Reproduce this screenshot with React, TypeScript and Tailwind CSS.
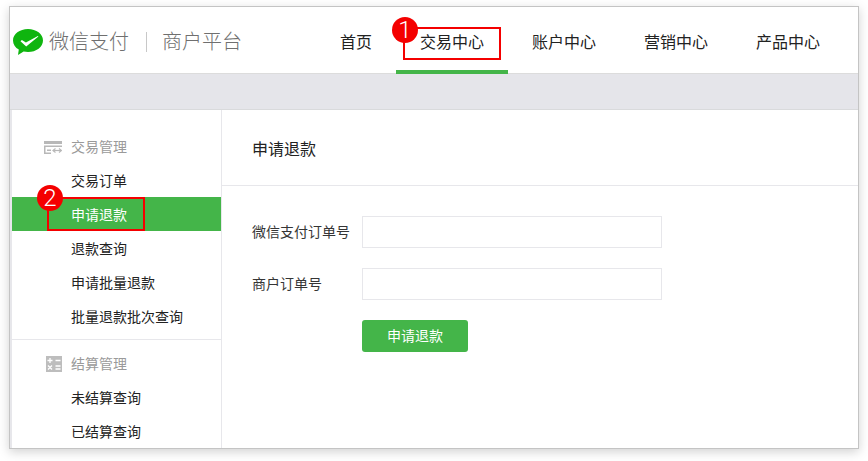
const font = "font-['Liberation_Sans','Noto_Sans_CJK_SC',sans-serif]";

const navItems = ["首页", "交易中心", "账户中心", "营销中心", "产品中心"];

const Logo = () => (
  <svg width="30" height="26" viewBox="0 0 30 26" className="shrink-0">
    <path
      d="M15 0C6.700 0 0 5 0 11.400c0 3.800 2.300 7.100 5.800 9.200L5 26l5.600-3.400c1.400.3 2.900.4 4.400.4 8.300 0 15-5.200 15-11.600S23.300 0 15 0z"
      fill="#0fb50f"
    />
    <path d="M7.500 12.200l1.400-1.300 4 2.600 12-6.500.5.600-12.200 10z" fill="#fff" />
  </svg>
);

const TradeIcon = () => (
  <svg width="18" height="13" viewBox="0 0 18 13" className="shrink-0">
    <path d="M0 0h18v3H0zM0 4.500h18V6H0zM0 6h1.500v7H0zM0 11.500h7V13H0zM3 8.500h4V10H3z" fill="#b8b8b8" />
    <path d="M9 9.500h8.500" stroke="#b8b8b8" strokeWidth="1.200" fill="none" />
    <path d="M11.500 7.500l-2.500 2 2.500 2M15 7.500l2.500 2-2.500 2" stroke="#b8b8b8" strokeWidth="1.200" fill="none" />
  </svg>
);

const CalcIcon = () => (
  <svg width="16" height="16" viewBox="0 0 16 16" className="shrink-0">
    <rect width="16" height="16" fill="#bdbdbd" />
    <path
      d="M1.500 4.500h5M4 2v5M9.500 4.500h5M2 9.500l4 4M6 9.500l-4 4M9.500 10h5M9.500 13h5"
      stroke="#fff"
      strokeWidth="1.300"
      fill="none"
    />
  </svg>
);

const MenuLink = ({ label, active }: { label: string; active?: boolean }) => (
  <div className={`h-[34px] flex items-center pl-[59px] pt-[2px] text-[14px] ${active ? "bg-[#44b549] text-white" : "text-[#222]"}`}>
    {label}
  </div>
);

const MenuTitle = ({ icon, label }: { icon: React.ReactNode; label: string }) => (
  <div className="h-[34px] pt-[1px]">
    <div className="h-[34px] flex items-center text-[14px] text-[#9a9a9a]">
      <div className="w-[59px] flex justify-end pr-[9px]">{icon}</div>
      {label}
    </div>
  </div>
);

const Field = ({ label }: { label: string }) => (
  <div className="flex items-center h-[32px]">
    <label className="w-[110px] text-[14px] text-[#353535]">{label}</label>
    <input className="w-[300px] h-[32px] border border-[#e7e7eb] bg-white outline-none" />
  </div>
);

const Badge = ({ n, className }: { n: string; className: string }) => (
  <div className={`absolute w-[26px] h-[26px] rounded-full bg-[#f40000] text-white font-['Roboto',sans-serif] font-light text-[24px] leading-[26px] text-center ${className}`}>
    {n}
  </div>
);

export default function App() {
  return (
    <div className={`relative w-[868px] h-[461px] bg-white overflow-hidden pl-[9px] pt-[6px] ${font}`}>
      <div className="w-[850px] h-[443px] border border-[#c4c4c4] bg-white shadow-[0_3px_10px_rgba(0,0,0,0.18)] flex flex-col overflow-hidden">
        <header className="h-[67px] shrink-0 border-b border-[#dcdcdc] flex items-center pl-[3px]">
          <div className="flex items-center w-[303px] pt-[3px]">
            <Logo />
            <span className="ml-[6px] text-[20px] font-light text-[#6f6f6f]">微信支付</span>
            <span className="ml-[17px] mr-[15px] w-px h-[20px] bg-[#c8c8c8]" />
            <span className="text-[20px] font-light text-[#6f6f6f]">商户平台</span>
          </div>
          <nav className="flex self-start h-[67px]">
            {navItems.map((item, i) => (
              <div
                key={item}
                className={`px-6 flex items-center text-[16px] text-[#222] pt-[8px] border-b-[4px] ${i === 1 ? "border-[#44b549]" : "border-transparent"}`}
              >
                {item}
              </div>
            ))}
          </nav>
        </header>

        <div className="h-[36px] shrink-0 bg-[#e5e5ea] border-b border-[#d9dadc]" />

        <div className="flex flex-1 min-h-0 border-l-[2px] border-[#e7e7eb]">
          <aside className="w-[210px] shrink-0 border-r border-[#e7e7eb] pt-[19px]">
            <MenuTitle icon={<TradeIcon />} label="交易管理" />
            <MenuLink label="交易订单" />
            <MenuLink label="申请退款" active />
            <MenuLink label="退款查询" />
            <MenuLink label="申请批量退款" />
            <MenuLink label="批量退款批次查询" />
            <div className="h-px bg-[#e7e7eb] mt-[6px] mb-[6px]" />
            <MenuTitle icon={<CalcIcon />} label="结算管理" />
            <MenuLink label="未结算查询" />
            <MenuLink label="已结算查询" />
          </aside>

          <main className="flex-1">
            <div className="h-[76px] border-b border-[#e7e7eb] flex items-center pl-[30px] pt-[4px] text-[16px] text-[#222]">
              申请退款
            </div>
            <div className="pl-[30px] pt-[30px] flex flex-col gap-[20px]">
              <Field label="微信支付订单号" />
              <Field label="商户订单号" />
              <button className="ml-[110px] w-[106px] h-[32px] pt-[1px] rounded-[3px] bg-[#44b549] text-white text-[14px]">
                申请退款
              </button>
            </div>
          </main>
        </div>
      </div>

      <div className="absolute left-[403px] top-[27px] w-[98px] h-[33px] border-2 border-[#f40000]" />
      <div className="absolute left-[47px] top-[197px] w-[98px] h-[34px] border-2 border-[#f40000]" />
      <Badge n="1" className="left-[392px] top-[17px]" />
      <Badge n="2" className="left-[37px] top-[185px]" />
    </div>
  );
}
